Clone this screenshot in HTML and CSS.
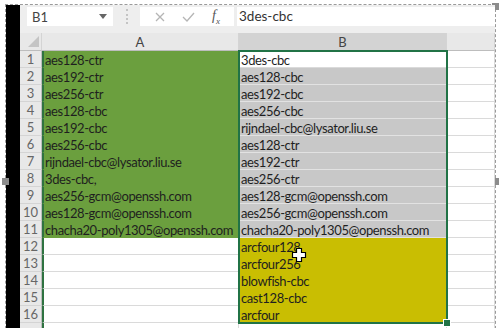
FILE: index.html
```html
<!DOCTYPE html>
<html lang="en">
<head>
    <meta charset="UTF-8">
    <title>Cipher list</title>
    <link rel="stylesheet" href="styles.css">
</head>
<body>
    <div class="frame">
        <span class="handle handle-tr"></span>
        <span class="handle handle-ml"></span>
        <span class="handle handle-mr"></span>
        <div class="blackbar"></div>
        <div class="excel">
            <div class="fbar">
                <div class="namebox">
                    <span>B1</span>
                    <svg class="dropdown" width="8" height="5" viewBox="0 0 8 5"><path d="M0 0h8L4 5z" fill="#666"/></svg>
                </div>
                <div class="fsep"></div>
                <div class="fbuttons">
                    <svg width="10" height="10" viewBox="0 0 10 10"><path d="M1 1l8 8M9 1l-8 8" stroke="#b5b5b5" stroke-width="1.3"/></svg>
                    <svg width="13" height="10" viewBox="0 0 13 10"><path d="M1 5l4 4 7-8" fill="none" stroke="#b5b5b5" stroke-width="1.3"/></svg>
                    <span class="fx">f<sub>x</sub></span>
                </div>
                <div class="finput">3des-cbc</div>
            </div>

            <div class="sheet" id="sheet">
                <div class="corner"><svg width="11" height="11" viewBox="0 0 11 11"><path d="M11 0v11H0z" fill="#c4c4c4"/></svg></div>
                <div class="colhead">A</div>
                <div class="colhead active">B</div>
                <div class="colhead"></div>
            </div>
            <div class="selection"></div>
            <svg class="cursor" width="16" height="16" viewBox="0 0 16 16">
                <path d="M5.5 1.5h5v4h4v5h-4v4h-5v-4h-4v-5h4z" fill="#fff" stroke="#000" stroke-width="1.2"/>
            </svg>
        </div>
    </div>

    <script>
        const colA = [
            'aes128-ctr', 'aes192-ctr', 'aes256-ctr', 'aes128-cbc', 'aes192-cbc',
            'aes256-cbc', 'rijndael-cbc@lysator.liu.se', '3des-cbc,',
            'aes256-gcm@openssh.com', 'aes128-gcm@openssh.com',
            'chacha20-poly1305@openssh.com'
        ];
        const colB = [
            '3des-cbc', 'aes128-cbc', 'aes192-cbc', 'aes256-cbc',
            'rijndael-cbc@lysator.liu.se', 'aes128-ctr', 'aes192-ctr', 'aes256-ctr',
            'aes128-gcm@openssh.com', 'aes256-gcm@openssh.com',
            'chacha20-poly1305@openssh.com', 'arcfour128', 'arcfour256',
            'blowfish-cbc', 'cast128-cbc', 'arcfour'
        ];

        const sheet = document.getElementById('sheet');

        // 16 filled rows plus the top of an empty 17th
        for (let r = 1; r <= 17; r++) {
            const head = document.createElement('div');
            head.className = 'rowhead';
            head.textContent = r <= 16 ? r : '';
            sheet.appendChild(head);

            const a = document.createElement('div');
            a.className = 'cell col-a' + (colA[r - 1] ? ' green' : '');
            a.textContent = colA[r - 1] || '';
            sheet.appendChild(a);

            const b = document.createElement('div');
            let kind = '';
            if (r === 1) kind = ' current';
            else if (r <= 11) kind = ' grey';
            else if (r <= 16) kind = ' yellow';
            b.className = 'cell col-b' + kind;
            b.textContent = colB[r - 1] || '';
            sheet.appendChild(b);

            const c = document.createElement('div');
            c.className = 'cell';
            sheet.appendChild(c);
        }
    </script>
</body>
</html>
```

FILE: styles.css
```css
* {
    margin: 0;
    padding: 0;
    box-sizing: border-box;
}

body {
    background: #fff;
    width: 503px;
    height: 328px;
    overflow: hidden;
    font-family: Lato, "Open Sans", sans-serif;
}

.frame {
    position: relative;
    display: flex;
    margin: 4px 0 0 5px;
    width: 491px;
    height: 340px;
    border: 1px dashed #9a9a9a;
}

.handle {
    position: absolute;
    width: 7px;
    height: 7px;
    background: #8c8c8c;
}

.handle-tr { top: -2px; right: -4px; }
.handle-ml { top: 173px; left: -4px; }
.handle-mr { top: 173px; right: -4px; }

.blackbar {
    width: 14px;
    background: #000;
}

.excel {
    position: relative;
    flex: 1;
    background: #fff;
}

/* formula bar */
.fbar {
    display: flex;
    align-items: flex-start;
    height: 28px;
    padding-top: 2px;
    background: #eeeeee;
}

.namebox {
    display: flex;
    align-items: center;
    justify-content: space-between;
    width: 86px;
    height: 19px;
    margin-left: 7px;
    padding: 0 6px 0 5px;
    background: #fff;
    font-size: 13px;
    color: #444;
}

.fsep {
    width: 1px;
    height: 15px;
    margin: 2px 12px 0 13px;
    border-left: 2px dotted #c4c4c4;
}

.fbuttons {
    display: flex;
    align-items: center;
    justify-content: space-between;
    width: 94px;
    height: 19px;
    padding: 0 14px 0 15px;
    background: #fff;
}

.fx {
    font-family: "Liberation Serif", serif;
    font-style: italic;
    font-size: 14px;
    color: #555;
}

.fx sub {
    font-size: 9px;
}

.finput {
    flex: 1;
    height: 19px;
    margin-left: 3px;
    padding-left: 2px;
    background: #fff;
    font-size: 13.5px;
    line-height: 19px;
    color: #333;
}

/* grid */
.sheet {
    display: grid;
    grid-template-columns: 22px 197px 208px 1fr;
    grid-template-rows: 18px repeat(17, 17px);
    font-size: 13px;
    letter-spacing: -0.4px;
    color: #1f1f1f;
}

.corner,
.colhead {
    background: #e8e8e8;
    border-bottom: 1px solid #bdbdbd;
    border-right: 1px solid #d4d4d4;
}

.corner {
    display: flex;
    align-items: flex-end;
    justify-content: flex-end;
    padding: 0 2px 3px 0;
}

.colhead {
    display: flex;
    align-items: center;
    justify-content: center;
    font-size: 13px;
    letter-spacing: 0;
    color: #444;
}

.colhead.active {
    background: #d3d3d3;
    border-bottom-color: #9e9e9e;
}

.rowhead {
    display: flex;
    align-items: center;
    justify-content: center;
    background: #e8e8e8;
    border-bottom: 1px solid #d4d4d4;
    border-right: 1px solid #bdbdbd;
    font-size: 13px;
    letter-spacing: 0;
    color: #666;
}

.cell {
    padding: 1px 0 0 2px;
    line-height: 16px;
    white-space: nowrap;
    border-bottom: 1px solid #dadada;
    border-right: 1px solid #dadada;
}

.col-a {
    padding-left: 1px;
    border-left: 2px solid #2f7341;
}

.green {
    background: #6b9f3e;
    border-bottom-color: #6b9f3e;
    border-right-color: #6b9f3e;
}

.grey {
    background: #c8c8c8;
    border-bottom-color: #e2e2e2;
}

.yellow {
    background: #c9be02;
    border-bottom-color: #c9be02;
}

.selection {
    position: absolute;
    left: 218px;
    top: 45px;
    width: 210px;
    height: 274px;
    border: 2px solid #217346;
    pointer-events: none;
}

.selection::after {
    content: "";
    position: absolute;
    right: -5px;
    bottom: -5px;
    width: 6px;
    height: 6px;
    background: #217346;
    border: 1px solid #fff;
}

.cursor {
    position: absolute;
    left: 271px;
    top: 242px;
}
```
